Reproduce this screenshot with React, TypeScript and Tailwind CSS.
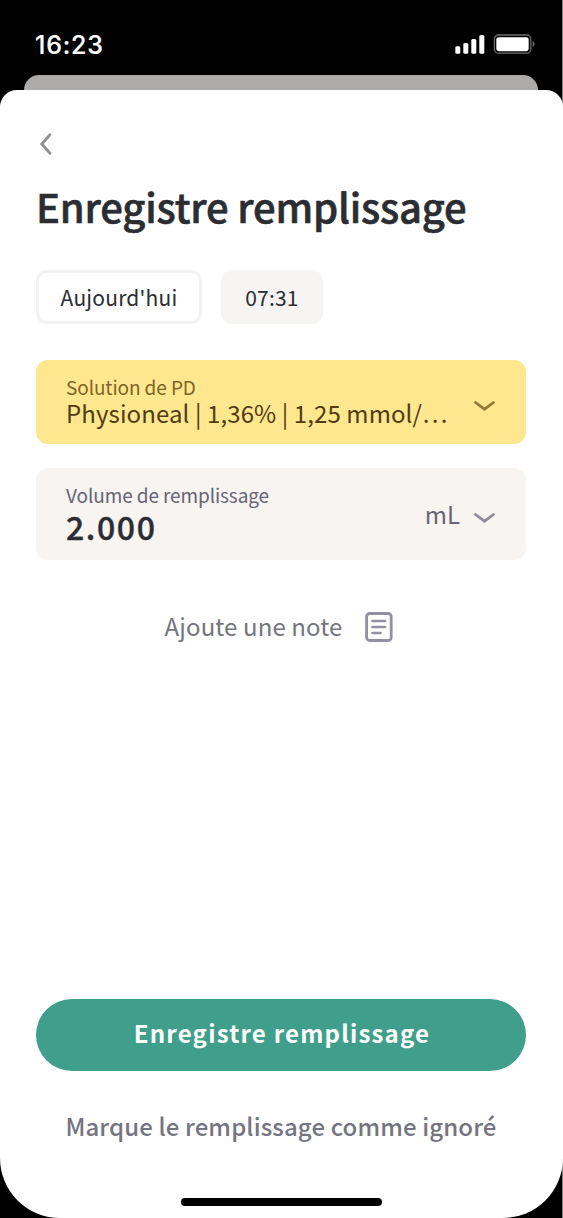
interface ChevronProps {
    color: string;
}

const ChevronDown = ({ color }: ChevronProps) => {
    return (
        <svg width="24" height="14" viewBox="0 0 24 14" fill="none">
            <path d="M3.5 2.5L12.5 9.2L21.5 2.5" stroke={color} strokeWidth="2.8" strokeLinecap="round" />
        </svg>
    )
}

const StatusBar = () => {
    return (
        <div className="flex h-[75px] items-start justify-between pl-[35px] pr-[27px]">
            <span className="pt-[30px] font-['Inter',sans-serif] text-[25px] leading-[30px] font-medium tracking-[0.8px] text-white [-webkit-text-stroke:0.2px_white]">16:23</span>
            <svg className="mt-[34px]" width="80" height="20" viewBox="0 0 80 20" fill="none">
                <rect x="0.3" y="12.3" width="5" height="7.4" rx="1.5" fill="#fff" />
                <rect x="8.3" y="9" width="5" height="10.7" rx="1.5" fill="#fff" />
                <rect x="16.3" y="5" width="5" height="14.7" rx="1.5" fill="#fff" />
                <rect x="24.3" y="1" width="5" height="18.7" rx="1.5" fill="#fff" />
                <rect x="39.4" y="1" width="36.4" height="18.2" rx="4" stroke="#6d6d6d" strokeWidth="1.3" />
                <rect x="41.3" y="3.2" width="32.4" height="14" rx="2.4" fill="#fff" />
                <path d="M77.7 7V13Q79.7 12 79.7 10T77.7 7Z" fill="#6d6d6d" />
            </svg>
        </div>
    )
}

const App = () => {
    return (
        <div className="h-[1218px] w-[563px] overflow-hidden bg-[#808080] font-['Noto_Sans_CJK_SC',sans-serif] text-[#2b2d33]">
            <div className="flex h-full w-[562px] flex-col bg-black">
                <StatusBar />
                {/* card behind the sheet */}
                <div className="mr-[24px] ml-[24px] h-[15px] shrink-0 rounded-t-[15px] bg-[#adabaa]" />
                <main className="flex w-[563px] flex-1 flex-col rounded-t-[17px] rounded-b-[60px] bg-white pr-[37px] pl-[36px]">
                    <button className="mt-[42px] ml-[2px] h-[24px] w-[16px]">
                        <svg width="16" height="24" viewBox="0 0 16 24" fill="none">
                            <path d="M12 2.7L3.8 12L12 21.3" stroke="#8e8e93" strokeWidth="2.8" strokeLinecap="round" />
                        </svg>
                    </button>
                    <h1 className="mt-[20px] text-[40px] leading-[60px] font-medium tracking-[-0.2px] whitespace-nowrap [-webkit-text-stroke:0.6px]">Enregistre remplissage</h1>

                    <div className="mt-[34px] flex gap-[19px] text-[21px] leading-[30px] tracking-[0.2px]">
                        <button className="h-[54px] w-[166px] rounded-[11px] border-3 border-[#f2f2f2]">Aujourd'hui</button>
                        <button className="h-[54px] w-[102px] rounded-[11px] bg-[#f7f5f3]">07:31</button>
                    </div>

                    <div className="mt-[36px] flex h-[84px] justify-between rounded-[12px] bg-[#fee78f] px-[30px]">
                        <div className="flex flex-col pt-[13px]">
                            <span className="text-[19px] leading-[27px] tracking-[-0.1px] text-[#816426]">Solution de PD</span>
                            <span className="text-[24px] leading-[25px] tracking-[0.1px] whitespace-nowrap text-[#513b10]">Physioneal | 1,36% | 1,25 mmol/…</span>
                        </div>
                        <div className="pt-[40px]"><ChevronDown color="#937a34" /></div>
                    </div>

                    <div className="mt-[24px] flex h-[92px] rounded-[12px] bg-[#f7f4f2] px-[30px]">
                        <div className="flex flex-1 flex-col pt-[13px]">
                            <span className="text-[19px] leading-[27px] tracking-[-0.1px] text-[#656472]">Volume de remplissage</span>
                            <span className="text-[32px] leading-[36px] font-medium tracking-[1.6px] [-webkit-text-stroke:0.4px]">2.000</span>
                        </div>
                        <span className="mt-[31px] mr-[12px] text-[24px] leading-[30px] text-[#656472]">mL</span>
                        <div className="pt-[44px]"><ChevronDown color="#8e8c98" /></div>
                    </div>

                    <button className="mt-[49px] flex items-center gap-[23px] self-center pr-[4px] text-[24px] leading-[34px] tracking-[0.1px] text-[#74747f]">
                        Ajoute une note
                        <svg className="mt-[2px]" width="28" height="30" viewBox="0 0 28 30" fill="none" stroke="#9290a2" strokeLinecap="round">
                            <rect x="1.6" y="1.5" width="24.6" height="27" rx="3" strokeWidth="2.8" />
                            <path d="M7.5 9H20M7.5 15H20M7.5 21H15.5" strokeWidth="2.7" />
                        </svg>
                    </button>

                    <div className="flex-1" />

                    <button className="h-[72px] rounded-full bg-[#3f9f8a] pb-[4px] pl-[2px] text-[24px] leading-[36px] font-bold tracking-[1.2px] text-white">Enregistre remplissage</button>
                    <button className="mt-[37px] self-center text-[24px] leading-[36px] font-medium tracking-[0.12px] whitespace-nowrap text-[#757481]">Marque le remplissage comme ignoré</button>
                    <div className="mt-[54px] mb-[12px] h-[8px] w-[201px] self-center rounded-full bg-black" />
                </main>
            </div>
        </div>
    )
}

export default App;
